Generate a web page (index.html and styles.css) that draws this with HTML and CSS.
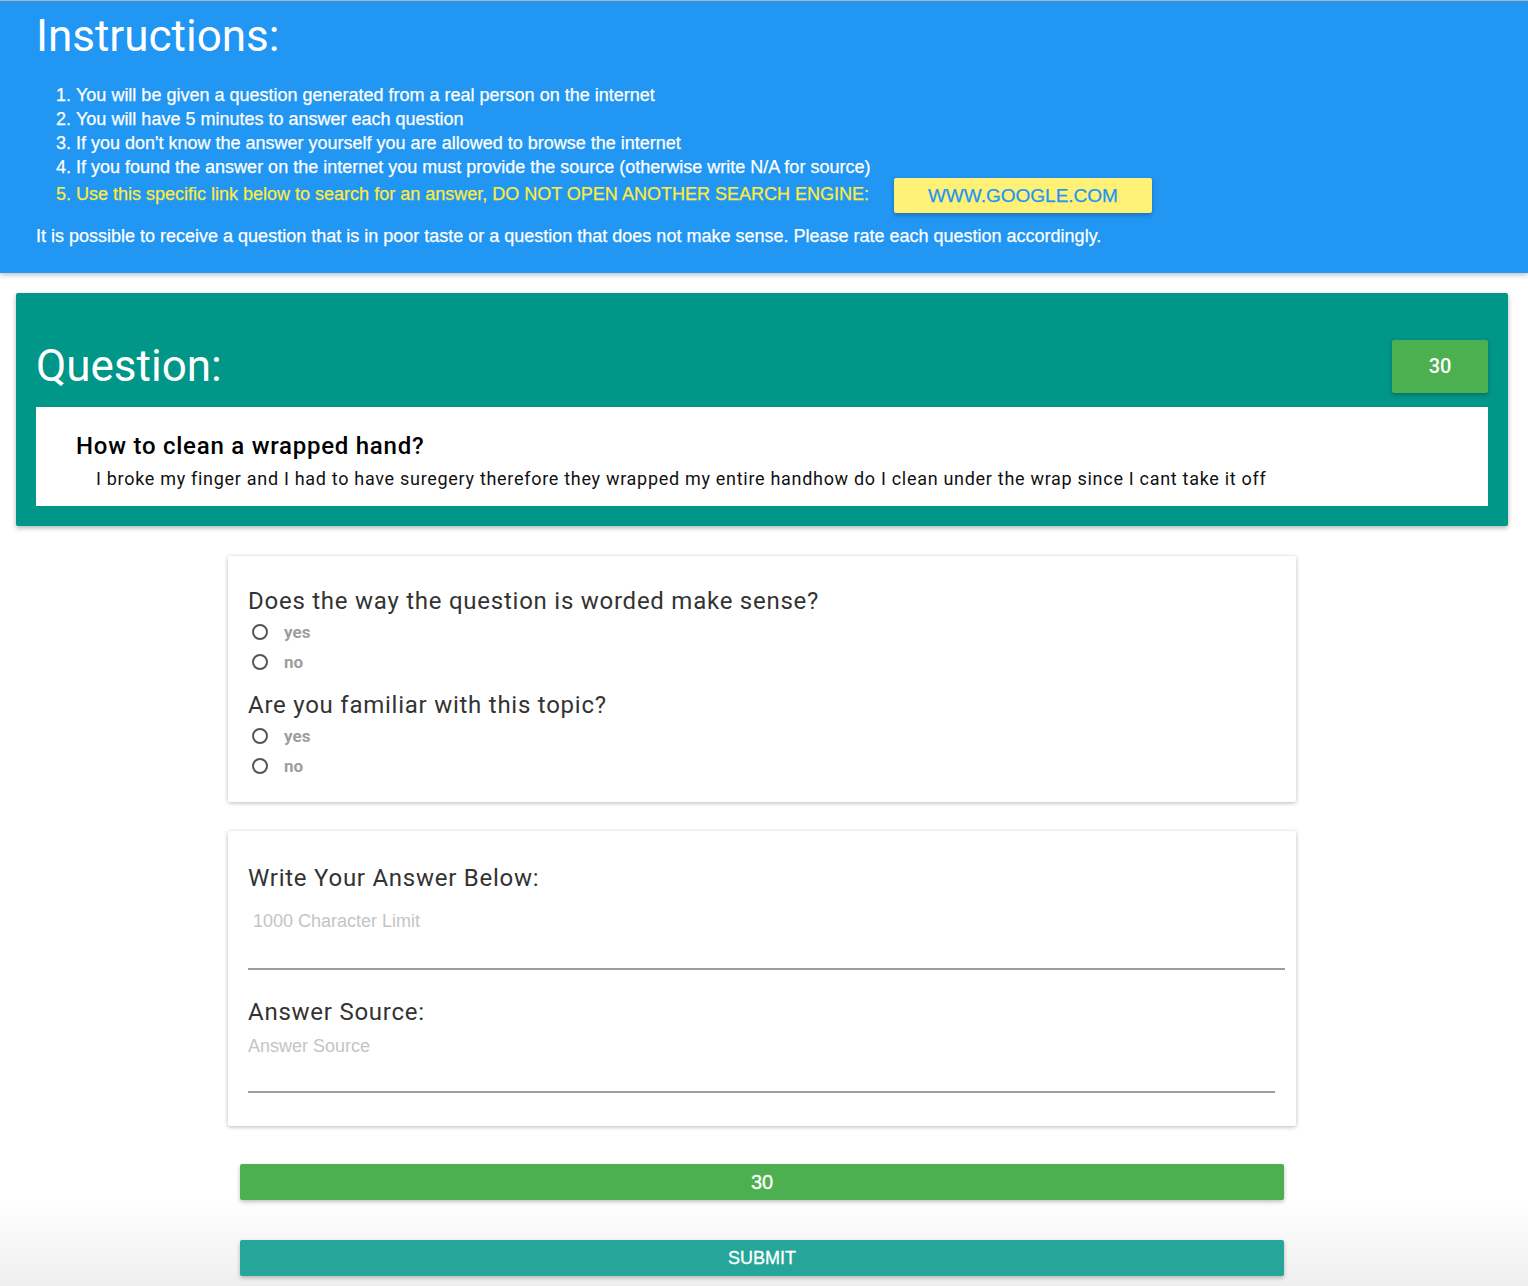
FILE: index.html
```html
<!DOCTYPE html>
<html>
<head>
<meta charset="utf-8">
<link rel="stylesheet" href="styles.css">
</head>
<body>
<header class="instructions">
  <h1 class="title">Instructions:</h1>
  <ol class="steps">
    <li>You will be given a question generated from a real person on the internet</li>
    <li>You will have 5 minutes to answer each question</li>
    <li>If you don't know the answer yourself you are allowed to browse the internet</li>
    <li>If you found the answer on the internet you must provide the source (otherwise write N/A for source)</li>
    <li class="warn"><span>Use this specific link below to search for an answer, DO NOT OPEN ANOTHER SEARCH ENGINE:</span><a class="google" href="#">WWW.GOOGLE.COM</a></li>
  </ol>
  <p class="note">It is possible to receive a question that is in poor taste or a question that does not make sense. Please rate each question accordingly.</p>
</header>

<section class="question-card">
  <div class="question-head">
    <h2 class="title">Question:</h2>
    <div class="timer">30</div>
  </div>
  <div class="question-body">
    <h3 class="q-title">How to clean a wrapped hand?</h3>
    <p class="q-text">I broke my finger and I had to have suregery therefore they wrapped my entire handhow do I clean under the wrap since I cant take it off</p>
  </div>
</section>

<main class="column">
  <div class="card rating">
    <div class="group">
      <h4 class="label">Does the way the question is worded make sense?</h4>
      <label class="radio"><span class="dot"></span><span class="opt">yes</span></label>
      <label class="radio"><span class="dot"></span><span class="opt">no</span></label>
    </div>
    <div class="group">
      <h4 class="label">Are you familiar with this topic?</h4>
      <label class="radio"><span class="dot"></span><span class="opt">yes</span></label>
      <label class="radio"><span class="dot"></span><span class="opt">no</span></label>
    </div>
  </div>

  <div class="card answer">
    <h4 class="label">Write Your Answer Below:</h4>
    <div class="field field-answer"><span class="ph ph-indent">1000 Character Limit</span></div>
    <h4 class="label label-source">Answer Source:</h4>
    <div class="field field-source"><span class="ph">Answer Source</span></div>
  </div>

  <div class="bar bar-timer">30</div>
  <div class="bar bar-submit">SUBMIT</div>
</main>
</body>
</html>
```

FILE: styles.css
```css
html, body {
  margin: 0;
  padding: 0;
}
body {
  min-height: 1286px;
  background: linear-gradient(to bottom, #ffffff 0, #ffffff 1200px, #efefef 1286px);
  font-family: "Liberation Sans", Arial, sans-serif;
}

.instructions {
  background: #2196F3;
  color: #fff;
  padding: 10px 36px 0;
  border-top: 1px solid #b0b0b0;
  box-shadow: 0 2px 5px rgba(0,0,0,0.25);
  height: 262px;
  -webkit-text-stroke: 0.25px currentColor;
}
.title {
  font-family: Roboto, sans-serif;
  font-weight: 400;
  font-size: 44px;
  line-height: 50px;
  margin: 0;
  letter-spacing: 0;
  -webkit-text-stroke: 0;
}
.steps {
  margin: 22px 0 0;
  padding-left: 40px;
  font-size: 18px;
  line-height: 24px;
  letter-spacing: 0;
}
.steps li.warn {
  color: #FFEB3B;
  margin-top: 3px;
}
.google {
  display: inline-block;
  vertical-align: middle;
  margin: -6px 0 -6px 25px;
  width: 258px;
  height: 35px;
  line-height: 35px;
  text-align: center;
  background: #FFF176;
  color: #2196F3;
  text-decoration: none;
  font-size: 19px;
  letter-spacing: 0;
  border-radius: 2px;
  box-shadow: 0 2px 4px rgba(0,0,0,0.25);
}
.note {
  margin: 17px 0 0;
  font-size: 18px;
  line-height: 24px;
  letter-spacing: 0;
}

.question-card {
  margin: 20px 20px 0 16px;
  background: #009688;
  padding: 46px 20px 20px;
  box-shadow: 0 2px 5px rgba(0,0,0,0.3);
  border-radius: 2px;
}
.question-head {
  display: flex;
  justify-content: space-between;
  align-items: center;
  height: 54px;
  margin-bottom: 14px;
}
.question-head .title {
  color: #fff;
}
.timer {
  width: 96px;
  height: 53px;
  background: #4CAF50;
  color: #fff;
  font-family: Roboto, sans-serif;
  font-weight: 500;
  font-size: 20px;
  display: flex;
  align-items: center;
  justify-content: center;
  border-radius: 2px;
  box-shadow: 0 2px 4px rgba(0,0,0,0.25);
}
.question-body {
  background: #fff;
  padding: 24px 40px 14px;
}
.q-title {
  margin: 0;
  font-family: Roboto, sans-serif;
  font-weight: 500;
  font-size: 24px;
  line-height: 30px;
  letter-spacing: 0.75px;
  color: #000;
}
.q-text {
  margin: 5px 0 0 20px;
  font-family: Roboto, sans-serif;
  font-size: 18px;
  line-height: 26px;
  letter-spacing: 0.7px;
  color: #111;
}

.column {
  width: 1068px;
  margin: 30px 0 0 228px;
}
.card {
  background: #fff;
  box-shadow: 0 1px 4px rgba(0,0,0,0.28);
  border-radius: 2px;
  padding: 0 20px;
}
.rating {
  padding-top: 29px;
  padding-bottom: 21px;
}
.label {
  margin: 0;
  font-family: Roboto, sans-serif;
  font-weight: 400;
  font-size: 24px;
  line-height: 32px;
  color: #333;
  letter-spacing: 0.75px;
}
.group + .group {
  margin-top: 12px;
}
.radio {
  display: flex;
  align-items: center;
  height: 30px;
  padding-left: 4px;
}
.dot {
  width: 12px;
  height: 12px;
  border: 2px solid #555;
  border-radius: 50%;
  margin-right: 16px;
}
.opt {
  font-family: Roboto, sans-serif;
  font-weight: 700;
  font-size: 17px;
  color: #9e9e9e;
}

.answer {
  margin-top: 29px;
  padding-top: 30px;
  padding-bottom: 33px;
}
.answer .label {
  line-height: 34px;
}
.field {
  border-bottom: 2px solid #9e9e9e;
}
.field-answer {
  height: 59px;
  padding-top: 14px;
  margin-right: -9px;
}
.field-source {
  height: 57px;
  padding-top: 5px;
  margin-right: 1px;
}
.label-source {
  margin-top: 25px;
}
.ph {
  display: block;
  font-size: 18px;
  color: #c4c4c4;
  line-height: 24px;
}
.ph-indent {
  padding-left: 5px;
}

.bar {
  margin: 0 12px;
  height: 36px;
  display: flex;
  align-items: center;
  justify-content: center;
  color: #fff;
  border-radius: 2px;
  box-shadow: 0 2px 4px rgba(0,0,0,0.25);
  -webkit-text-stroke: 0.3px currentColor;
}
.bar-timer {
  margin-top: 38px;
  background: #4CAF50;
  font-size: 20px;
}
.bar-submit {
  margin-top: 40px;
  background: #26A69A;
  font-size: 18px;
}
```
